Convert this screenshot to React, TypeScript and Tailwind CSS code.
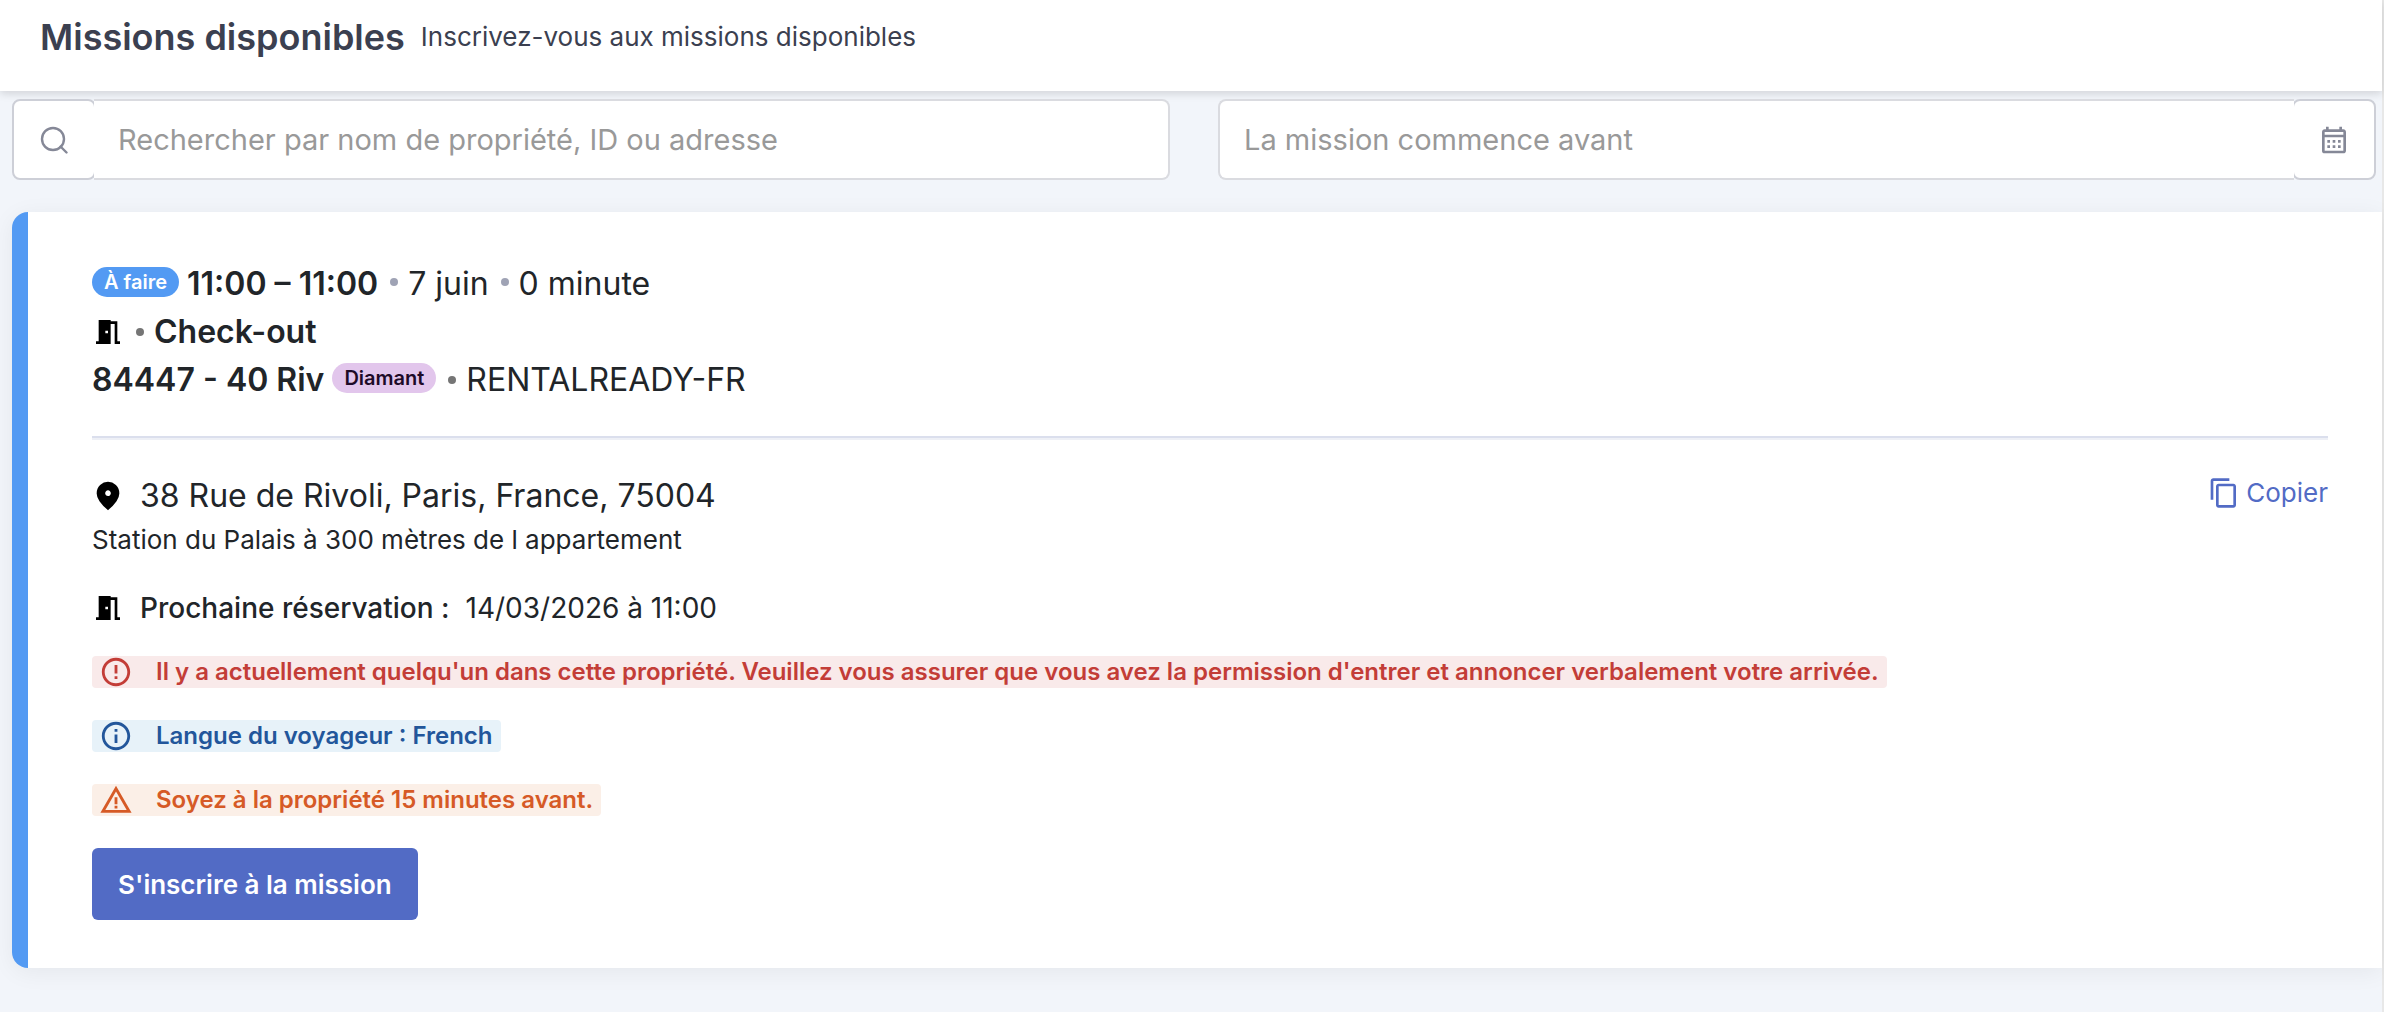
import type { ReactNode } from "react";
import {
  MdContentCopy,
  MdErrorOutline,
  MdInfoOutline,
  MdMeetingRoom,
  MdOutlineCalendarMonth,
  MdWarningAmber,
} from "react-icons/md";

const mission = {
  status: "À faire",
  time: "11:00 – 11:00",
  date: "7 juin",
  duration: "0 minute",
  type: "Check-out",
  property: "84447 - 40 Riv",
  tier: "Diamant",
  company: "RENTALREADY-FR",
  address: "38 Rue de Rivoli, Paris, France, 75004",
  directions: "Station du Palais à 300 mètres de l appartement",
  nextBooking: "14/03/2026 à 11:00",
};

function SearchIcon() {
  return (
    <svg viewBox="0 0 28 28" className="size-7" fill="none" stroke="#858897" strokeWidth="2.4">
      <circle cx="13" cy="13" r="11" />
      <path d="M20.5 20.5l6 6" strokeLinecap="round" />
    </svg>
  );
}

function PinIcon() {
  return (
    <svg viewBox="0 0 24 24" className="-mx-px size-[34px] shrink-0" fill="#000">
      <path d="M12 12q.825 0 1.413-.588T14 10t-.587-1.412T12 8t-1.412.588T10 10t.588 1.413T12 12m0 10q-4.025-3.425-6.012-6.362T4 10.2q0-3.75 2.413-5.975T12 2t5.588 2.225T20 10.2q0 2.5-1.987 5.438T12 22" />
    </svg>
  );
}

function Dot({ className }: { className: string }) {
  return <span className={`size-2 shrink-0 rounded-full ${className}`} />;
}

function Badge({ className, children }: { className: string; children: ReactNode }) {
  return (
    <span className={`mb-1 rounded-full px-3 text-xl leading-[30px] font-semibold ${className}`}>{children}</span>
  );
}

function Alert({ icon, className, children }: { icon: ReactNode; className: string; children: ReactNode }) {
  return (
    <p className={`flex h-8 w-fit items-center rounded px-2 text-2xl font-semibold ${className}`}>
      {icon}
      <span className="ml-6 leading-8">{children}</span>
    </p>
  );
}

export default function App() {
  return (
    <div className="min-h-screen border-r-2 border-[#e8e8e8] bg-[#f2f5fa] font-['Inter',sans-serif] text-[#212529]">
      <header className="relative flex h-[91px] items-start gap-4 bg-white px-10 pt-[13px] text-[#3b4050] shadow-[0_3px_8px_rgba(0,0,0,0.13)]">
        <h1 className="text-[36px] leading-[48px] font-semibold">Missions disponibles</h1>
        <p className="text-[26px] leading-[48px]">Inscrivez-vous aux missions disponibles</p>
      </header>

      <main>
        <form className="relative grid grid-cols-2 gap-12 pt-2 pr-[6px] pl-3">
          <div className="flex h-[81px]">
            <label
              htmlFor="search"
              className="flex w-[84px] shrink-0 items-center justify-center rounded-lg border-2 border-[#cdcfd7] bg-white"
            >
              <SearchIcon />
            </label>
            <input
              id="search"
              type="text"
              placeholder="Rechercher par nom de propriété, ID ou adresse"
              className="relative -ml-0.5 min-w-0 flex-1 rounded-r-lg border-2 border-l-0 border-[#dadbe0] bg-white px-6 text-[29px] outline-none placeholder:text-[#999]"
            />
          </div>
          <div className="flex h-[81px]">
            <input
              id="before"
              type="text"
              placeholder="La mission commence avant"
              className="relative -mr-0.5 min-w-0 flex-1 rounded-l-lg border-2 border-r-0 border-[#dadbe0] bg-white px-6 text-[29px] outline-none placeholder:text-[#999]"
            />
            <label
              htmlFor="before"
              className="flex w-[84px] shrink-0 items-center justify-center rounded-lg border-2 border-[#cdcfd7] bg-white"
            >
              <MdOutlineCalendarMonth className="size-8 text-[#858897]" />
            </label>
          </div>
        </form>

        <article className="mt-8 ml-3 rounded-l-2xl border-l-[16px] border-[#539af3] bg-white py-12 pr-[54px] pl-16 shadow-[0_4px_24px_rgba(0,0,0,0.06)]">
          <div className="text-[32px] leading-[48px]">
            <div className="flex items-center">
              <Badge className="mr-2 bg-[#539af3] text-white">{mission.status}</Badge>
              <strong className="font-semibold">{mission.time}</strong>
              <Dot className="mr-[10px] mb-1 ml-3 bg-[#9fa3b5]" />
              <span>{mission.date}</span>
              <Dot className="mr-[10px] mb-1 ml-3 bg-[#9fa3b5]" />
              <span>{mission.duration}</span>
            </div>
            <div className="flex items-center">
              <MdMeetingRoom className="size-8 text-black" />
              <Dot className="mr-[10px] ml-3 bg-[#757575]" />
              <strong className="font-semibold">{mission.type}</strong>
            </div>
            <div className="flex items-center">
              <strong className="font-semibold">{mission.property}</strong>
              <Badge className="ml-2 bg-[#e2c6ec] text-[#1e0a28]">{mission.tier}</Badge>
              <Dot className="mr-[10px] ml-3 bg-[#757575]" />
              <span>{mission.company}</span>
            </div>
          </div>

          <hr className="my-8 h-1 border-t-2 border-b-2 border-t-[#dbdfed] border-b-[#eef0f6]" />

          <div className="flex items-start justify-between">
            <div>
              <div className="flex items-center gap-4 text-[32px] leading-[48px]">
                <PinIcon />
                <span>{mission.address}</span>
              </div>
              <p className="text-[26px] leading-10">{mission.directions}</p>
            </div>
            <button type="button" className="flex items-center gap-1.5 text-[26px] leading-[42px] text-[#526bc5]">
              <MdContentCopy className="size-8" />
              Copier
            </button>
          </div>

          <div className="mt-6 flex items-center text-[28px] leading-[48px]">
            <MdMeetingRoom className="size-8 text-black" />
            <span className="mx-4 font-medium">Prochaine réservation :</span>
            <span>{mission.nextBooking}</span>
          </div>

          <div className="mt-6 flex flex-col gap-8">
            <Alert
              icon={<MdErrorOutline className="-mx-px size-[34px] shrink-0" />}
              className="bg-[#f9eaea] text-[#c33d37]"
            >
              Il y a actuellement quelqu'un dans cette propriété. Veuillez vous assurer que vous avez la permission
              d'entrer et annoncer verbalement votre arrivée.
            </Alert>
            <Alert
              icon={<MdInfoOutline className="-mx-px size-[34px] shrink-0" />}
              className="bg-[#e7f2f9] text-[#22569b]"
            >
              Langue du voyageur : French
            </Alert>
            <Alert
              icon={<MdWarningAmber className="-mx-px size-[34px] shrink-0" />}
              className="bg-[#fbefe7] text-[#d65a26]"
            >
              Soyez à la propriété 15 minutes avant.
            </Alert>
          </div>

          <button
            type="button"
            className="mt-8 h-18 rounded-md bg-[#526bc5] px-[26px] text-[26px] font-semibold text-white"
          >
            S'inscrire à la mission
          </button>
        </article>
      </main>
    </div>
  );
}
